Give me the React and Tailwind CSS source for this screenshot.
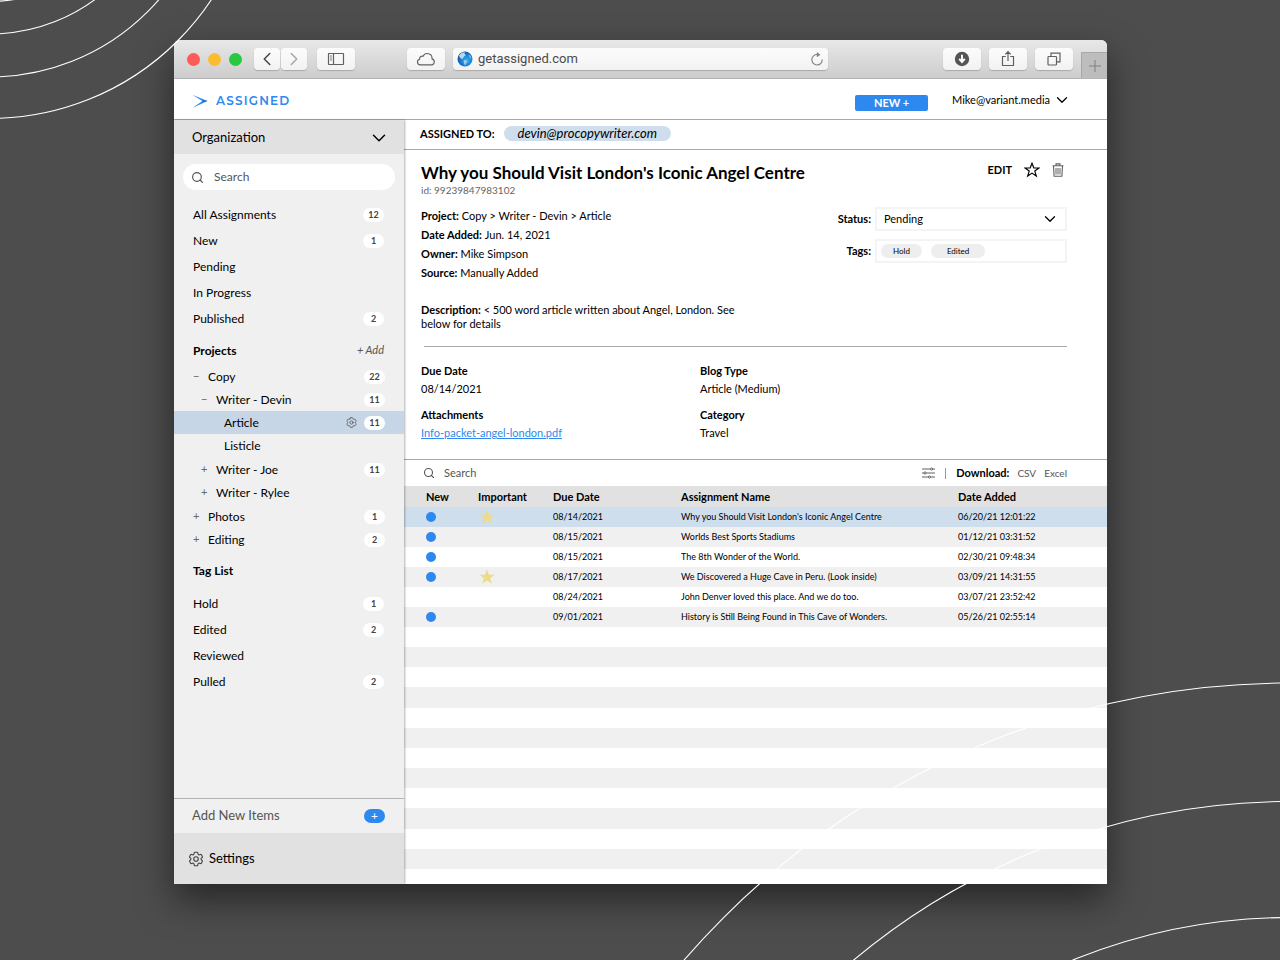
import React, { useState } from "react";
import { ChevronDown, ChevronLeft, ChevronRight, Search } from "lucide-react";
import { HiOutlineCog6Tooth } from "react-icons/hi2";

const folders = [
  { name: "All Assignments", count: 12 },
  { name: "New", count: 1 },
  { name: "Pending" },
  { name: "In Progress" },
  { name: "Published", count: 2 }
];

const tags = [
  { name: "Hold", count: 1 },
  { name: "Edited", count: 2 },
  { name: "Reviewed" },
  { name: "Pulled", count: 2 }
];

const projects = [
  {
    name: "Copy",
    count: 22,
    children: [
      {
        name: "Writer - Devin",
        count: 11,
        children: [{ name: "Article", count: 11 }, { name: "Listicle" }]
      },
      { name: "Writer - Joe", count: 11, closed: true },
      { name: "Writer - Rylee", closed: true }
    ]
  },
  { name: "Photos", count: 1, closed: true },
  { name: "Editing", count: 2, closed: true }
];

const assignments = [
  { isNew: true, starred: true, due: "08/14/2021", name: "Why you Should Visit London's Iconic Angel Centre", added: "06/20/21 12:01:22" },
  { isNew: true, due: "08/15/2021", name: "Worlds Best Sports Stadiums", added: "01/12/21 03:31:52" },
  { isNew: true, due: "08/15/2021", name: "The 8th Wonder of the World.", added: "02/30/21 09:48:34" },
  { isNew: true, starred: true, due: "08/17/2021", name: "We Discovered a Huge Cave in Peru. (Look inside)", added: "03/09/21 14:31:55" },
  { due: "08/24/2021", name: "John Denver loved this place. And we do too.", added: "03/07/21 23:52:42" },
  { isNew: true, due: "09/01/2021", name: "History is Still Being Found in This Cave of Wonders.", added: "05/26/21 02:55:14" }
];

function GlobeIcon() {
  return (
    <svg width="16" height="16" viewBox="0 0 16 16" aria-hidden="true">
      <defs>
        <radialGradient id="sea" cx="0.6" cy="0.6" r="0.6">
          <stop offset="0" stopColor="#35b4f5" />
          <stop offset="0.6" stopColor="#1a7fd6" />
          <stop offset="1" stopColor="#1558a0" />
        </radialGradient>
      </defs>
      <circle cx="8" cy="8" r="7.5" fill="url(#sea)" />
      <path d="M2 4.5 5 1.6 8 1.5 7.5 3 9 4 7 5.5 5.5 8 4 7.5 2.5 6Z" fill="#b9d8e6" />
      <path d="M7 9 9 9.3 10.5 10.5 9 12.5 8.3 14.5 7.2 13 6.6 10.5Z" fill="#9ccbe8" />
      <path d="M11.5 3 13.5 5 14.6 7.6 13 7 11.8 5Z" fill="#7dbbe8" />
    </svg>
  );
}

function CloudIcon() {
  return (
    <svg width="20" height="14" viewBox="0 0 20 14" fill="none" stroke="#606060" strokeWidth="1.1" aria-hidden="true">
      <path d="M4.4 12.9A2.9 2.9 0 0 1 3.6 7.2 A2.6 2.6 0 0 1 7.1 4.3 A4.7 4.7 0 0 1 16 6.9 A3.1 3.1 0 0 1 15.9 12.9Z" />
    </svg>
  );
}

function SidebarIcon() {
  return (
    <svg width="18" height="14" viewBox="0 0 18 14" fill="none" stroke="#606060" aria-hidden="true">
      <rect x="1.5" y="1.5" width="15" height="11" rx="0.5" strokeWidth="1.2" />
      <path d="M6.5 1.5v11" strokeWidth="1.2" />
      <path d="M3 4h2M3 6h2M3 8h2" strokeWidth="0.8" />
    </svg>
  );
}

function DownloadIcon() {
  return (
    <svg width="16" height="16" viewBox="0 0 16 16" aria-hidden="true">
      <circle cx="8" cy="8" r="7.2" fill="#555" />
      <path d="M8 3.8v6M5.2 7.8 8 11l2.8-3.2" stroke="#fff" strokeWidth="1.9" fill="none" />
    </svg>
  );
}

function ShareIcon() {
  return (
    <svg width="14" height="18" viewBox="0 0 14 18" fill="none" stroke="#606060" strokeWidth="1.2" aria-hidden="true">
      <path d="M4.8 6.5H1.5v9h11v-9H9.2M7 11V1.8M4.3 4.3 7 1.5l2.7 2.8" />
    </svg>
  );
}

function TabsIcon() {
  return (
    <svg width="14" height="14" viewBox="0 0 14 14" fill="none" stroke="#606060" strokeWidth="1.2" aria-hidden="true">
      <rect x="1" y="4.5" width="8.5" height="8.5" rx="0.8" />
      <path d="M4 4.2V1.2h9v8.6h-3" />
    </svg>
  );
}

function ReloadIcon() {
  return (
    <svg width="14" height="14" viewBox="0 0 14 14" fill="none" aria-hidden="true">
      <path d="M7.5 2.6A5.2 5.2 0 1 0 12.2 7.4" stroke="#808080" strokeWidth="1.1" />
      <path d="M6.8 0 10.4 2.7 6.8 5.2Z" fill="#808080" />
    </svg>
  );
}

function LogoMark() {
  return (
    <svg width="16" height="14" viewBox="0 0 16 14" fill="#2d89ef" aria-hidden="true">
      <path d="M0.2 0.8 15.6 7 11.2 7.4Z" />
      <path d="M0.8 13.8 15.6 7 10.4 7.1Z" />
      <path d="M10.4 6.1 15.6 7 10.2 8.2Z" fill="#1c6fd4" />
    </svg>
  );
}

function StarIcon({ size, className }) {
  return (
    <svg width={size} height={size} viewBox="0 0 16 16" className={className} aria-hidden="true">
      <path d="M8 1.2 9.8 6h5.1l-4.1 3.1 1.5 4.9L8 11.1 3.7 14l1.5-4.9L1.1 6h5.1Z" />
    </svg>
  );
}

function TrashIcon() {
  return (
    <svg width="12" height="14" viewBox="0 0 12 14" fill="none" stroke="#606060" aria-hidden="true">
      <path d="M0.5 2.8h11M4 2.6V0.9h4v1.7M1.5 3l0.6 10.2h7.8L10.5 3" strokeWidth="1.1" />
      <path d="M4 5v6.5M6 5v6.5M8 5v6.5" strokeWidth="1" />
    </svg>
  );
}

function FilterIcon() {
  return (
    <svg width="13" height="12" viewBox="0 0 13 12" fill="none" stroke="#606060" strokeWidth="1" aria-hidden="true">
      <path d="M0 2h8.4M10.8 2H13M0 6h1.8M4.2 6H13M0 10h6.3M8.7 10H13" />
      <circle cx="9.6" cy="2" r="1.1" />
      <circle cx="3" cy="6" r="1.1" />
      <circle cx="7.5" cy="10" r="1.1" />
    </svg>
  );
}

function BarButton({ label, className = "w-[38px]", children }) {
  return (
    <button
      aria-label={label}
      className={`flex h-[22px] shrink-0 items-center justify-center rounded bg-gradient-to-b from-[#fcfcfc] to-[#f2f2f2] shadow-[0_1px_1px_rgba(0,0,0,0.2)] ${className}`}
    >
      {children}
    </button>
  );
}

function BrowserBar() {
  return (
    <div className="flex h-[39px] items-center border-b border-[#b4b4b4] bg-gradient-to-b from-[#e8e8e8] to-[#cdcdcd] pl-[13px]">
      <div className="flex gap-2">
        <span className="size-[13px] rounded-full bg-[#fc5b57]" />
        <span className="size-[13px] rounded-full bg-[#fdbc2e]" />
        <span className="size-[13px] rounded-full bg-[#28c840]" />
      </div>
      <div className="ml-3 flex gap-px">
        <BarButton label="Back" className="w-[26px]">
          <ChevronLeft size={22} strokeWidth={1.7} color="#4a4a4a" />
        </BarButton>
        <BarButton label="Forward" className="w-[26px]">
          <ChevronRight size={22} strokeWidth={1.7} color="#a8a8a8" />
        </BarButton>
      </div>
      <div className="ml-[10px]">
        <BarButton label="Show sidebar">
          <SidebarIcon />
        </BarButton>
      </div>
      <div className="ml-[52px] flex flex-1 gap-2">
        <BarButton label="iCloud tabs">
          <CloudIcon />
        </BarButton>
        <div className="flex h-[22px] flex-1 items-center gap-[5px] rounded bg-gradient-to-b from-[#fcfcfc] to-[#f2f2f2] px-1 shadow-[0_1px_1px_rgba(0,0,0,0.2)]">
          <GlobeIcon />
          <input
            aria-label="Address"
            defaultValue="getassigned.com"
            className="min-w-0 flex-1 bg-transparent font-[Roboto,sans-serif] text-[13px] text-[#4a4a4a] outline-none"
          />
          <button aria-label="Reload">
            <ReloadIcon />
          </button>
        </div>
      </div>
      <div className="ml-[115px] flex gap-2">
        <BarButton label="Downloads">
          <DownloadIcon />
        </BarButton>
        <BarButton label="Share">
          <ShareIcon />
        </BarButton>
        <BarButton label="Show tabs">
          <TabsIcon />
        </BarButton>
      </div>
      <button
        aria-label="New tab"
        className="ml-2 flex h-[26px] w-[26px] items-center justify-center self-end border-t border-l border-[#a8a8a8] bg-[#bdbdbd]"
      >
        <svg width="12" height="12" viewBox="0 0 12 12" stroke="#808080" aria-hidden="true">
          <path d="M6 0v12M0 6h12" />
        </svg>
      </button>
    </div>
  );
}

function AppHeader() {
  return (
    <header className="flex h-[41px] items-end justify-between border-b border-[#a9a9a9] pr-9 pb-2 pl-[18px]">
      <a href="#home" className="flex h-5 items-center gap-2 text-[#2d89ef]">
        <LogoMark />
        <span className="font-[Montserrat,Inter,sans-serif] text-[12px] font-semibold tracking-widest">ASSIGNED</span>
      </a>
      <div className="flex items-end gap-6">
        <button className="h-4 w-[73px] rounded-xs bg-[#2d89ef] text-[11px] leading-4 font-bold text-white">NEW +</button>
        <button className="flex h-[22px] items-center gap-[3px] text-[11px]">
          Mike@variant.media
          <ChevronDown size={18} strokeWidth={1.7} />
        </button>
      </div>
    </header>
  );
}

function Badge({ children }) {
  return (
    <span className="w-[21px] shrink-0 rounded-full bg-white text-center text-[9px] leading-[14px] font-bold text-[#444]">
      {children}
    </span>
  );
}

function NavList({ items }) {
  return (
    <ul>
      {items.map((it) => (
        <li key={it.name}>
          <button className="flex h-[26px] w-full items-center justify-between pr-5 pl-[19px] text-left">
            {it.name}
            {it.count && <Badge>{it.count}</Badge>}
          </button>
        </li>
      ))}
    </ul>
  );
}

const indents = ["pl-[19px]", "pl-[27px]", "pl-[35px]"];

function Tree({ items, depth = 0, selected, onSelect }) {
  return (
    <ul className={depth > 0 ? "pb-px" : ""}>
      {items.map((it) => {
        const active = selected === it.name;
        const sign = it.children ? "−" : it.closed ? "+" : "";
        return (
          <li key={it.name}>
            <button
              onClick={() => onSelect(it.name)}
              className={`flex h-[23px] w-full items-center pr-[19px] text-left ${indents[depth]} ${
                active ? "bg-[#c6d6e6]" : ""
              }`}
            >
              <span className="w-[15px] text-[11px] text-[#666]">{sign}</span>
              <span className="flex-1">{it.name}</span>
              {active && <HiOutlineCog6Tooth size={13} className="mr-[6px] text-[#555]" />}
              {it.count && <Badge>{it.count}</Badge>}
            </button>
            {it.children && (
              <Tree items={it.children} depth={depth + 1} selected={selected} onSelect={onSelect} />
            )}
          </li>
        );
      })}
    </ul>
  );
}

function Sidebar() {
  const [selected, setSelected] = useState("Article");
  return (
    <aside className="z-10 flex w-[230px] shrink-0 flex-col bg-[#f0f0f0] text-[12px] shadow-[1px_0_2px_rgba(0,0,0,0.3)]">
      <button className="flex h-[34px] items-center justify-between bg-[#e1e1e1] pt-px pr-[14px] pl-[18px] text-[13px]">
        Organization
        <ChevronDown size={22} strokeWidth={1.6} />
      </button>
      <label className="mx-[9px] mt-[10px] flex h-[26px] items-center gap-[10px] rounded-full bg-white px-2 text-[#555]">
        <Search size={13} strokeWidth={2.2} />
        <input aria-label="Search" placeholder="Search" className="min-w-0 flex-1 outline-none placeholder:text-[#555]" />
      </label>

      <nav className="mt-3">
        <NavList items={folders} />
        <div className="mt-[7px] mb-[3px] flex h-[23px] items-center justify-between pr-5 pl-[19px]">
          <h2 className="font-bold">Projects</h2>
          <button className="text-[11px] text-[#555] italic">+ Add</button>
        </div>
        <Tree items={projects} selected={selected} onSelect={setSelected} />
        <h2 className="my-2 flex h-6 items-center pl-[19px] font-bold">Tag List</h2>
        <NavList items={tags} />
      </nav>

      <div className="mt-auto">
        <button className="flex h-[35px] w-full items-center justify-between border-t border-[#b4b4b4] pr-[19px] pl-[18px] text-[13px] text-[#555]">
          Add New Items
          <span className="w-[21px] rounded-full bg-[#2d89ef] text-center text-[12px] leading-[14px] text-white">+</span>
        </button>
        <button className="flex h-[51px] w-full items-center gap-1 bg-[#e1e1e1] pt-px pl-[13px] text-[13px]">
          <HiOutlineCog6Tooth size={18} className="text-[#444]" />
          Settings
        </button>
      </div>
    </aside>
  );
}

function Meta({ label, children }) {
  return (
    <div>
      <dt className="inline font-bold">{label}:</dt> <dd className="inline">{children}</dd>
    </div>
  );
}

function Field({ label, children }) {
  return (
    <div>
      <dt className="font-bold">{label}</dt>
      <dd>{children}</dd>
    </div>
  );
}

function AssignmentDetail() {
  return (
    <article className="border-b border-[#a9a9a9] pt-3 pr-[40px] pb-[17px] pl-[17px] text-[11px]">
      <div className="flex items-start justify-between">
        <div>
          <h1 className="text-[17px] leading-[22px] font-bold">Why you Should Visit London's Iconic Angel Centre</h1>
          <p className="text-[10px] leading-3 text-[#666]">id: 99239847983102</p>
        </div>
        <div className="flex h-4 items-center gap-3 pr-[3px]">
          <button className="font-bold">EDIT</button>
          <button aria-label="Mark as important">
            <StarIcon size={16} className="fill-none stroke-black stroke-[1.2]" />
          </button>
          <button aria-label="Delete">
            <TrashIcon />
          </button>
        </div>
      </div>

      <div className="mt-[10px] flex justify-between">
        <dl className="leading-[19px]">
          <Meta label="Project">
            Copy &gt; Writer - Devin &gt; Article
          </Meta>
          <Meta label="Date Added">Jun. 14, 2021</Meta>
          <Meta label="Owner">Mike Simpson</Meta>
          <Meta label="Source">Manually Added</Meta>
        </dl>
        <div className="flex flex-col items-end gap-2 pt-px">
          <div className="flex items-center gap-1">
            <label htmlFor="status" className="font-bold">
              Status:
            </label>
            <div className="relative">
              <select
                id="status"
                defaultValue="Pending"
                className="block h-6 w-[192px] appearance-none border-2 border-[#f4f4f4] bg-white pl-[7px]"
              >
                <option>Pending</option>
                <option>In Progress</option>
                <option>Published</option>
              </select>
              <ChevronDown size={18} strokeWidth={1.7} className="pointer-events-none absolute top-[3px] right-2" />
            </div>
          </div>
          <div className="flex items-center gap-1">
            <span className="font-bold">Tags:</span>
            <div className="flex h-6 w-[192px] items-center gap-[9px] border-2 border-[#f4f4f4] px-1 text-[8px] leading-[14px]">
              <span className="rounded-full bg-[#eee] px-3">Hold</span>
              <span className="rounded-full bg-[#eee] px-4">Edited</span>
            </div>
          </div>
        </div>
      </div>

      <p className="mt-[21px] max-w-[330px] leading-[14px]">
        <b>Description:</b> &lt; 500 word article written about Angel, London. See below for details
      </p>

      <hr className="mt-[15px] ml-[3px] border-[#a9a9a9]" />

      <dl className="mt-[15px] grid grid-cols-[279px_1fr] gap-y-2 leading-[18px]">
        <Field label="Due Date">08/14/2021</Field>
        <Field label="Blog Type">Article (Medium)</Field>
        <Field label="Attachments">
          <a href="#packet" className="text-[#2d89ef] underline">
            Info-packet-angel-london.pdf
          </a>
        </Field>
        <Field label="Category">Travel</Field>
      </dl>
    </article>
  );
}

function AssignmentTable() {
  const [current, setCurrent] = useState(0);
  return (
    <section className="flex flex-1 flex-col">
      <div className="flex h-[26px] items-center justify-between pr-[40px] pl-[19px] text-[11px] text-[#555]">
        <label className="flex items-center gap-[9px]">
          <Search size={12} strokeWidth={2.2} />
          <input aria-label="Search assignments" placeholder="Search" className="w-40 outline-none placeholder:text-[#555]" />
        </label>
        <div className="flex items-center gap-[10px]">
          <button aria-label="Filter">
            <FilterIcon />
          </button>
          <span className="h-[11px] w-px bg-[#999]" />
          <div className="flex items-center gap-2">
            <span className="font-bold text-black">Download:</span>
            <button className="text-[10px]">CSV</button>
            <button className="text-[10px]">Excel</button>
          </div>
        </div>
      </div>
      <table className="w-full table-fixed text-left text-[9px] leading-5">
        <thead className="bg-[#e1e1e1] text-[11px]">
          <tr className="h-[21px]">
            <th className="w-[74px] pl-[22px]">New</th>
            <th className="w-[75px]">Important</th>
            <th className="w-[128px]">Due Date</th>
            <th>Assignment Name</th>
            <th className="w-[149px]">Date Added</th>
          </tr>
        </thead>
        <tbody>
          {assignments.map((a, i) => (
            <tr
              key={a.name}
              className={`h-5 ${i === current ? "bg-[#cfdeed]" : "even:bg-[#f0f0f0]"}`}
              onClick={() => setCurrent(i)}
            >
              <td className="pl-[22px]">
                {a.isNew && <span className="block size-[10px] rounded-full bg-[#2d89ef]" />}
              </td>
              <td>{a.starred && <StarIcon size={18} className="fill-[#ecdc8a]" />}</td>
              <td>{a.due}</td>
              <td className="whitespace-nowrap">{a.name}</td>
              <td>{a.added}</td>
            </tr>
          ))}
        </tbody>
      </table>
      <div className="flex flex-1 flex-col" aria-hidden="true">
        {Array.from({ length: 13 }, (_, i) => (
          <div key={i} className="min-h-3 flex-4 last:flex-3 even:bg-[#f0f0f0]" />
        ))}
      </div>
    </section>
  );
}

function Rings() {
  return (
    <div className="pointer-events-none absolute inset-0 z-20 overflow-hidden" aria-hidden="true">
      <svg className="absolute top-0 left-0" width="260" height="125" fill="none" stroke="#fff" strokeWidth="1.1">
        <circle cx="-10" cy="-147" r="148.5" />
        <circle cx="-10" cy="-143" r="177" />
        <circle cx="-10" cy="-146" r="223" />
        <circle cx="-10" cy="-147" r="265.5" />
      </svg>
      <svg className="absolute right-0 bottom-0" width="620" height="290" viewBox="660 670 620 290" fill="none" stroke="#fff" strokeWidth="1.1">
        <circle cx="1290" cy="1484" r="801" />
        <circle cx="1290" cy="1481" r="679.5" />
        <circle cx="1290" cy="1492" r="574.5" />
      </svg>
    </div>
  );
}

export default function App() {
  return (
    <div className="relative flex min-h-screen bg-[#4d4d4d] pt-[40px] pr-[173px] pb-[76px] pl-[174px] font-[Lato,sans-serif] text-black">
      <div className="flex min-w-0 flex-1 flex-col overflow-hidden rounded-t-md bg-white shadow-[0_16px_36px_rgba(0,0,0,0.5)]">
        <BrowserBar />
        <AppHeader />
        <div className="flex flex-1">
          <Sidebar />
          <main className="flex min-w-0 flex-1 flex-col">
            <div className="flex items-start gap-[9px] border-b border-[#a9a9a9] px-4 pt-1.5 pb-2 leading-[15px]">
              <span className="text-[11px] font-bold">ASSIGNED TO:</span>
              <span className="rounded-full bg-[#cfdeed] px-[14px] text-[13px] leading-[15px] italic">
                devin@procopywriter.com
              </span>
            </div>
            <AssignmentDetail />
            <AssignmentTable />
          </main>
        </div>
      </div>
      <Rings />
    </div>
  );
}
